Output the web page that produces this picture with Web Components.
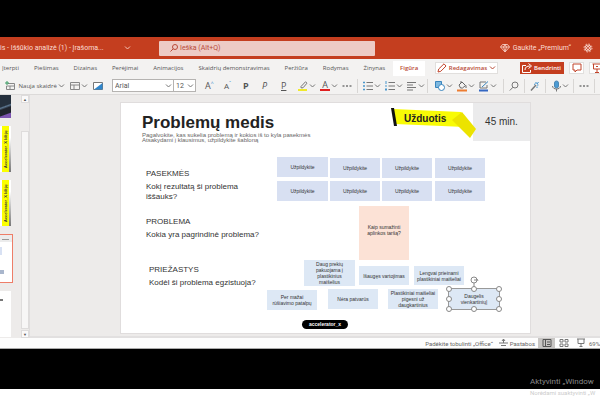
<!DOCTYPE html>
<html lang="lt">
<head>
<meta charset="utf-8">
<title>Iššūkio analizė (1)</title>
<style>
html,body{margin:0;height:100%}
body{font-family:"Open Sans","Noto Sans",sans-serif;font-size:6px;overflow:hidden;background:#000}
</style>
</head>
<body>
<slide-app></slide-app>
<script>
const BASE = `<style>
*{box-sizing:border-box}
button,input,select{font:inherit;color:inherit;margin:0;padding:0;border:0;background:none;line-height:inherit}
svg{display:block;fill:none;stroke:#777;flex:none;overflow:visible}
a{color:inherit;text-decoration:none}
</style>`;
function define(name, html, setup) {
  const t = document.createElement('template');
  t.innerHTML = BASE + html;
  customElements.define(name, class extends HTMLElement {
    connectedCallback() {
      if (this.shadowRoot) return;
      this.attachShadow({mode: 'open'}).append(t.content.cloneNode(true));
      if (setup) setup.call(this, this.shadowRoot);
    }
  });
}
const ICONS = {
  newslide: '<path d="M3 2.5h6.5v6h-8V5M1.5 5h8M5 5v3.5" stroke="#888"/><path d="M2 0v4M0 2h4" stroke="#3b9b62"/>',
  layout: '<path d="M.5 1.5h9v7h-9zM.5 4h9M4 4v4.5" stroke="#888"/>',
  picture: '<path d="M.5 1.5h9v7h-9z" stroke="#777" fill="#fff"/><path d="M1 8.5L9.5 2v6.5z" fill="#2f86cc" stroke="none"/>',
  pen: '<path d="M3 5.5L7.500.8 9 2.2 5 6.8H3z" stroke="#777"/><path d="M0 9h9" stroke="#f0e92b" stroke-width="2"/>',
  bullets: '<path d="M3.500 1.500H10M3.500 5H10M3.500 8.500H10"/><path d="M0 1.500h2M0 5h2M0 8.500h2" stroke="#4a97cc" stroke-width="1.500"/>',
  numbers: '<path d="M3.500 1.500H10M3.500 5H10M3.500 8.500H10"/><path d="M1 0v3M0 5h2M0 8.500h2M1 7v3" stroke="#4a97cc"/>',
  align: '<path d="M0 1.500h9M0 4h6M0 6.500h9M0 9h6"/>',
  shapes: '<path d="M.5.5h6v6h-6z" stroke="#3985bd" fill="#7db8e0"/><circle cx="6.500" cy="6.500" r="3" fill="#fff" stroke="#3985bd"/>',
  bucket: '<path d="M2 4l3-3 3.500 3.500-3 2.500H3.500zM4 2V0M9 4.500V7" stroke="#666"/><path d="M0 9.500h10" stroke="#ed7d31" stroke-width="2"/>',
  outline: '<path d="M7 1H1v6h7V4" stroke="#777"/><path d="M3 6L9 .5" stroke="#3985bd"/><path d="M0 9.500h9" stroke="#3467c2" stroke-width="2"/>',
  search: '<circle cx="6" cy="4" r="3"/><path d="M4 6.200L.8 9.500"/>',
  wand: '<path d="M1 9.500L6 4" stroke-width="1.500"/><path d="M6 1v2M8.500 4H7M8.500 1L7 3M4 3l1 .5M7 7V5.500" stroke="#3b8fcc"/>',
  mic: '<rect x="3.500" y="0" width="4" height="7" rx="2" fill="#4c9bd3" stroke="#4c88b5"/><path d="M1.500 5c0 4 8 4 8 0M5.500 8v2.500"/>',
  dots: '<path d="M.5 5h2M4 5h2M7.500 5h2" stroke-width="1.500"/>',
  pencil: '<path d="M1 9l.7-3L7 .8 9 3 3.800 8.300z" stroke="#c1442b"/>',
  share: '<path d="M4 2.500H.5v7h8V7M3 7c0-3 2-4 5-4M6.500.5L9.500 3 6.500 5.500" stroke="#fff"/>',
  comment: '<path d="M1 1h8v6H5L3 9V7H1z" stroke="#c1442b"/>',
  present: '<path d="M.5 1h9M1.500 1v5h7V1M5 6v3M3 9.500h4M4 3.500h2" stroke="#c1442b"/>',
  gem: '<path d="M2.500 1.500h5L9.500 4 5 9 .5 4zM.5 4h9M3.500 4L5 8.500 6.500 4 5 1.500z" stroke="#fbdcd3" stroke-width=".8"/>',
  gear: '<circle cx="5" cy="5" r="1.500" stroke="#fbdcd3"/><circle cx="5" cy="5" r="3" stroke="#f5cabd"/><circle cx="5" cy="5" r="4" stroke="#f5cabd" stroke-dasharray="1.600 1.540"/>',
  notes: '<path d="M0 5h9M2 7.500h5M4.500 1v4M3 3l1.500-2L6 3"/>',
  normal: '<path d="M1 1.500h8v7H1zM3.500 1.500v7M5 6.500h3M5 4h3" stroke="#555"/>',
  grid: '<path d="M1 1.500h3v2.500H1zM6 1.500h3v2.500H6zM1 6h3v2.500H1zM6 6h3v2.500H6z"/>',
  show: '<path d="M1 1h8M2 1v4.500h6V1M5 5.500v3M3.500 8.500h3"/>'
};
define('ui-icon', `<style>:host{display:block;width:10px;height:10px;flex:none}</style><svg width="10" height="10" viewBox="0 0 10 10" aria-hidden="true"></svg>`,
  function(r){ r.querySelector('svg').innerHTML = ICONS[this.getAttribute('name')]; });
define('ui-chevron', `<style>:host{display:block;width:5px;flex:none}path{stroke:var(--chev,#777)}</style><svg width="5" height="4" viewBox="0 0 5 4" aria-hidden="true"><path d="M0 .5l2.500 2.500L5 .5"/></svg>`);
define('tool-button', `<style>
:host{display:block;flex:none}
button{display:flex;align-items:center;gap:2px;height:12px;white-space:nowrap;min-width:10px}
ui-chevron{display:none}:host([menu]) ui-chevron{display:block}
</style><button type="button"><slot></slot><ui-chevron></ui-chevron></button>`,
  function(r){ r.querySelector('button').setAttribute('aria-label', this.getAttribute('label')); });

define('title-bar', `<style>
:host{display:flex;align-items:center;height:22px;background:#c43e1f;color:#fbdcd3;white-space:nowrap;--chev:#f5c4b6;overflow:hidden;font-family:Roboto,sans-serif;font-size:7px}
.doc{width:125px}
label{display:flex;align-items:center;gap:2px;height:15px;margin-left:29px;padding-left:11px;flex:0 1 216px;background:#edcbc5;border-radius:1px;color:#b94a39}
label svg{stroke:#b94a39}
input{flex:1;min-width:0;outline:0}
input::placeholder{color:#b94a39;opacity:1}
.end{margin-left:auto;display:flex;align-items:center;gap:3px;padding-right:7px}
.end button{display:flex;align-items:center;gap:3px}
.gear{margin-left:9px}
</style>
<span class="doc">is - Iššūkio analizė (1) - Įrašoma...</span><ui-chevron></ui-chevron>
<label aria-label="Ieška"><svg width="8" height="8" viewBox="0 0 8 8"><circle cx="5" cy="3" r="2.500"/><path d="M3.200 4.800L.5 7.500"/></svg><input type="search" placeholder="Ieška (Alt+Q)"></label>
<div class="end"><button type="button"><ui-icon name="gem"></ui-icon>Gaukite „Premium“</button><button class="gear" type="button" aria-label="Nustatymai"><ui-icon name="gear"></ui-icon></button></div>`);

define('tab-bar', `<style>
:host{display:flex;height:18px;background:#f3f2f1;color:#555;overflow:hidden;white-space:nowrap}
nav{display:flex;align-items:center;gap:15px;padding-left:2px}
nav a.on{background:#fff;color:#b84a35;font-weight:600;height:15px;line-height:15px;padding:0 7px;margin-left:-7px}
.end{display:flex;align-items:center;gap:5px;margin-left:auto;margin-right:-4px}
.end button{display:flex;align-items:center;justify-content:center;gap:3px;height:12px;background:#fff;color:#b84a35;border:1px solid #e1dfdd;font-weight:600;width:15px}
.end .edit{width:63px;margin-right:17px;--chev:#b84a35}
.end .share{width:44px;background:#c43e1f;color:#fff;border-color:#c43e1f}
.end ui-icon{margin:0 -1px}
</style>
<nav><a href="#">Įterpti</a><a href="#">Piešimas</a><a href="#">Dizainas</a><a href="#">Perėjimai</a><a href="#">Animacijos</a><a href="#">Skaidrių demonstravimas</a><a href="#">Peržiūra</a><a href="#">Rodymas</a><a href="#">Žinynas</a><a href="#" class="on">Figūra</a></nav>
<div class="end"><button type="button" class="edit"><ui-icon name="pencil"></ui-icon>Redagavimas<ui-chevron></ui-chevron></button><button type="button" class="share"><ui-icon name="share"></ui-icon>Bendrinti</button><button type="button" aria-label="Komentarai"><ui-icon name="comment"></ui-icon></button><button type="button" aria-label="Pateikti"><ui-icon name="present"></ui-icon></button></div>`);

define('tool-bar', `<style>
:host{display:flex;align-items:center;height:18px;background:#f3f2f1;color:#555;border-bottom:1px solid #dcdad9;overflow:hidden;padding-left:5px}
div{display:flex;align-items:center;flex:none}
.slides{gap:6px;width:107px}
.fonts{width:84px;background:#fff;border:1px solid #b5b3b1;height:13px;font-family:Roboto,sans-serif}
.pick{position:relative;height:11px;width:60px}
.pick+.pick{width:22px;border-left:1px solid #b5b3b1}
.pick select{appearance:none;width:100%;height:100%;padding:0 2px;font-size:7px;outline:0}
.pick ui-chevron{position:absolute;right:2px;top:4px;pointer-events:none}
.letters{gap:9px;margin-left:9px;font-size:9px}
.letters tool-button{width:10px}
.marks,.lists,.draw{gap:5px}
.marks{margin-left:7px}
.lists{margin-left:5px}
.draw{margin-left:7px}
hr{width:1px;height:14px;border:0;background:#d8d6d4;margin:0;flex:none}
.lists hr{margin-left:-2px}
.red{border-bottom:2px solid #e02020;line-height:8px;width:10px;font-size:9px}
sup{font-size:5px;color:#2f86cc;line-height:0}
small{font-size:8px}
.tail{flex:1;justify-content:space-between;margin-left:7px;padding-right:5px}
</style>
<div class="slides"><tool-button menu label="Nauja skaidrė"><ui-icon name="newslide"></ui-icon>&nbsp;Nauja skaidrė</tool-button><tool-button menu label="Maketas"><ui-icon name="layout"></ui-icon></tool-button><tool-button label="Paveikslėlis"><ui-icon name="picture"></ui-icon></tool-button></div>
<div class="fonts"><div class="pick"><select aria-label="Šriftas"><option>Arial</option></select><ui-chevron></ui-chevron></div><div class="pick"><select aria-label="Dydis"><option>12</option></select><ui-chevron></ui-chevron></div></div>
<div class="letters"><tool-button label="Didinti"><span>A<sup>^</sup></span></tool-button><tool-button label="Mažinti"><small>A<sup>ˇ</sup></small></tool-button><tool-button label="Paryškintasis"><b>P</b></tool-button><tool-button label="Pasvirasis"><i>P</i></tool-button><tool-button label="Pabraukimas"><u>P</u></tool-button></div>
<div class="marks"><tool-button menu label="Žymeklis"><ui-icon name="pen"></ui-icon></tool-button><tool-button menu label="Šrifto spalva"><span class="red">A</span></tool-button><tool-button label="Daugiau"><ui-icon name="dots"></ui-icon></tool-button><hr></div>
<div class="lists"><tool-button menu label="Ženkleliai"><ui-icon name="bullets"></ui-icon></tool-button><tool-button menu label="Numeravimas"><ui-icon name="numbers"></ui-icon></tool-button><tool-button menu label="Lygiavimas"><ui-icon name="align"></ui-icon></tool-button><hr></div>
<div class="draw"><tool-button menu label="Figūros"><ui-icon name="shapes"></ui-icon></tool-button><tool-button menu label="Užpildas"><ui-icon name="bucket"></ui-icon></tool-button><tool-button menu label="Kontūras"><ui-icon name="outline"></ui-icon></tool-button></div>
<div class="tail"><hr><tool-button label="Rasti"><ui-icon name="search"></ui-icon></tool-button><hr><tool-button label="Dizaineris"><ui-icon name="wand"></ui-icon></tool-button><hr><tool-button menu label="Diktuoti"><ui-icon name="mic"></ui-icon></tool-button><hr><tool-button label="Daugiau"><ui-icon name="dots"></ui-icon></tool-button><hr></div>`);

define('thumb-item', `<style>
:host{display:flex;flex:none;height:46px;width:11px;background:#fff;overflow:hidden}
:host([kind=dark]){height:23px;background:linear-gradient(160deg,#25303d 0 45%,#5c7690 50%,#20242d 58% 78%,#7c54b0 82%)}
:host([kind=label]){background:linear-gradient(#fff,#fff 25%,#777) right/3px 100% no-repeat #fff}
span{display:none}
:host([kind=label]) span{display:block;writing-mode:vertical-rl;transform:rotate(180deg);background:#fbff00;color:#333;font:bold 4px/7px "Liberation Sans",sans-serif;width:7px;margin-left:2px;white-space:nowrap;text-align:center}
:host([kind=current]){height:49px;width:13px;border:1px solid #ee7d68;border-left:0;flex-direction:column}
i{display:none;background:#d8e1f3}
:host([kind=current]) i{display:block;height:8px;width:2px;margin-top:5px}
:host([kind=current]) i:first-of-type{height:7px;width:100%;background:linear-gradient(#999,#999) 2px 4px/7px 1px no-repeat #ececec;margin:0}
:host([kind=current]) i:last-of-type{height:4px;width:4px;margin-top:15px;background:#a9b6cc}
:host([kind=plain]){background:linear-gradient(#777,#777) 0 8px/3px 2px no-repeat #fff}
</style><span></span><i></i><i></i><i></i>`,
  function(r){ r.querySelector('span').textContent = this.getAttribute('text') || ''; });

define('thumb-pane', `<style>
:host{display:flex;width:30px;flex:none;border-right:1px solid #dfdddd;overflow:hidden;height:100%}
.list{display:flex;flex-direction:column;gap:8px;width:21px}
.bar{width:8px;display:flex;flex-direction:column;justify-content:space-between}
.bar button{height:8px;background:#faf9f9;border:1px solid #dedcdc;font-size:4px;line-height:5px;color:#555;flex:none}
.thumb{flex:1;margin:28px 0 1px;background:#f7f6f6;border:1px solid #dedcdc}
</style><div class="list"><thumb-item kind="dark"></thumb-item><thumb-item kind="label" text="Accelerator_X Idėjų"></thumb-item><thumb-item kind="label" text="Accelerator_X Idėjų"></thumb-item><thumb-item kind="current"></thumb-item><thumb-item kind="plain"></thumb-item></div>
<div class="bar"><button type="button" aria-label="Aukštyn">▲</button><div class="thumb"></div><button type="button" aria-label="Žemyn">▼</button></div>`);

/* A shape placed on the slide canvas: x, y, w, h in slide pixels. */
define('note-card', `<style>
:host{position:absolute;display:flex;align-items:center;justify-content:center;text-align:center;background:#dde8f5;font-size:5px;line-height:6px;color:#333;white-space:nowrap}
:host([tone=blue]){background:#d8e0f2}
:host([tone=peach]){background:#fce2d6}
:host([selected]){outline:1px solid #999}
svg{display:none;position:absolute;left:0;top:-10px}
:host([selected]) svg{display:block}
</style><slot></slot>
<svg width="50" height="30" viewBox="0 0 50 30"><g fill="#fff" stroke="#888"><path d="M25 3v7"/><circle cx="0" cy="10" r="2.500"/><circle cx="25" cy="10" r="2.500"/><circle cx="50" cy="10" r="2.500"/><circle cx="0" cy="20" r="2.500"/><circle cx="50" cy="20" r="2.500"/><circle cx="0" cy="30" r="2.500"/><circle cx="25" cy="30" r="2.500"/><circle cx="50" cy="30" r="2.500"/><circle cx="25" cy="1" r="3"/><path d="M25 1h4M27.500 0l1.500 1.500"/></g></svg>`,
  function(){ const [x,y,w,h] = this.getAttribute('at').split(' '); Object.assign(this.style,{left:x+'px',top:y+'px',width:w+'px',height:h+'px'}); });

define('task-slide', `<style>
:host{display:block;position:relative;background:#fff;outline:1px solid #e0dddd;font-family:"Liberation Sans",Arial,sans-serif;color:#333}
h1,p,section{position:absolute;margin:0}
h1{left:21px;top:10px;font-size:17px;line-height:20px;color:#222;white-space:nowrap}
.sub{left:21px;top:30px;font-size:6px;line-height:5px;color:#666;white-space:nowrap}
section{left:25px;font-size:8px;line-height:10px;width:100px}
section p{position:static;margin-top:3px}
.time{right:0;top:0;width:57px;height:38px;background:#ebebec;font-size:10px;line-height:38px;text-align:center}
.tag{position:absolute;left:270px;top:4px;stroke:none}
.task{left:283px;top:10px;font-size:10px;line-height:12px;font-weight:bold;color:#222}
.logo{left:181px;top:217px;width:46px;height:9px;border-radius:5px;background:#000;color:#fff;font-size:5px;line-height:9px;font-weight:bold;text-align:center}
</style>
<h1>Problemų medis</h1>
<p class="sub">Pagalvokite, kas sukelia problemą ir kokios iš to kyla pasekmės<br>Atsakydami į klausimus, užpildykite šabloną</p>
<p class="time">45 min.</p>
<svg class="tag" width="86" height="34" viewBox="0 0 86 34"><path d="M2 2l68 3 4 15-70-3z" fill="#f8fb05"/><path d="M61 13l10-8 14 17-6 9z" fill="#ece300"/><path d="M0 1h3l3 18H3z" fill="#111"/></svg>
<p class="task">Užduotis</p>
<section style="top:66px">PASEKMĖS<p>Kokį rezultatą ši problema iššauks?</p></section>
<section style="top:114px;width:130px">PROBLEMA<p>Kokia yra pagrindinė problema?</p></section>
<section style="left:28px;top:162px;width:130px">PRIEŽASTYS<p>Kodėl ši problema egzistuoja?</p></section>
<note-card tone="blue" at="156 54 51 20">Užpildykite</note-card><note-card tone="blue" at="209 55 50 20">Užpildykite</note-card><note-card tone="blue" at="261 55 50 20">Užpildykite</note-card><note-card tone="blue" at="314 55 50 20">Užpildykite</note-card>
<note-card tone="blue" at="156 78 51 20">Užpildykite</note-card><note-card tone="blue" at="209 78 50 20">Užpildykite</note-card><note-card tone="blue" at="261 78 50 20">Užpildykite</note-card><note-card tone="blue" at="314 78 50 20">Užpildykite</note-card>
<note-card tone="peach" at="238 103 50 54"><span>Kaip sumažinti<br>aplinkos taršą?<br>&nbsp;</span></note-card>
<note-card at="183 157 51 26">Daug prekių<br>pakuojama į<br>plastikinius<br>maišelius</note-card>
<note-card at="238 163 50 19">Išaugęs vartojimas</note-card>
<note-card at="293 163 50 19">Lengvai prieinami<br>plastikiniai maišeliai</note-card>
<note-card at="146 187 50 20">Per mažai<br>rūšiavimo patalpų</note-card>
<note-card at="207 186 50 20">Nėra patvarūs</note-card>
<note-card at="267 186 50 20">Plastikiniai maišeliai<br>pigesni už<br>daugkartinius</note-card>
<note-card selected at="328 186 50 20">Daugelis<br>vienkartinių|</note-card>
<p class="logo">accelerator_x</p>`,
  function(r){ r.querySelectorAll('note-card').forEach(c => { const s = document.createElement('span'); s.append(...c.childNodes); c.append(s); }); });

define('work-space', `<style>
:host{display:flex;flex:1;min-height:0;background:#edebea;overflow:hidden}
main{flex:1;display:flex;padding:8px 70px 3px 91px;border-bottom:2px solid #e2e0e0}
task-slide{flex:1;min-height:230px}
</style><thumb-pane></thumb-pane><main><task-slide></task-slide></main>`);

define('status-bar', `<style>
:host{display:flex;align-items:center;height:11px;background:#fdfdfd;border-bottom:1px solid #aaa;color:#666;white-space:nowrap;justify-content:flex-end;overflow:hidden;font-family:Roboto,sans-serif}
button{display:flex;align-items:center;justify-content:center;gap:1px;height:10px}
.view{width:17px}.on{background:#c8c6c4}
.zoom{width:11px;justify-content:flex-start}
.note{margin:0 3px 0 6px}
</style><button type="button">Padėkite tobulinti „Office“</button><button class="note" type="button"><ui-icon name="notes"></ui-icon>Pastabos</button><button class="view on" type="button" aria-label="Įprastas"><ui-icon name="normal"></ui-icon></button><button class="view" type="button" aria-label="Rūšiuoklė"><ui-icon name="grid"></ui-icon></button><button class="view" type="button" aria-label="Demonstravimas"><ui-icon name="show"></ui-icon></button><button class="zoom" type="button">69%</button>`);

define('slide-app', `<style>
:host{display:flex;flex-direction:column;height:100vh;min-height:400px;position:relative;overflow:hidden;background:#fff}
.top{height:37px;background:#000;flex:none}
.bottom{height:40px;background:#000;flex:none}
.edge{height:11px;background:#fff;flex:none}
title-bar,tab-bar,tool-bar,status-bar{flex:none}
.mark{position:absolute;left:calc(100% - 70px);bottom:3px;margin:0;font-family:Roboto,sans-serif;font-size:8px;line-height:12px;color:#888;white-space:nowrap}
.mark small{display:block;font-size:6px;line-height:9px;color:#ccc}
</style><div class="top"></div><title-bar></title-bar><tab-bar></tab-bar><tool-bar></tool-bar><work-space></work-space><status-bar></status-bar><div class="bottom"></div><div class="edge"></div>
<p class="mark">Aktyvinti „Window<small>Norėdami suaktyvinti „W</small></p>`);
</script>
</body>
</html>
